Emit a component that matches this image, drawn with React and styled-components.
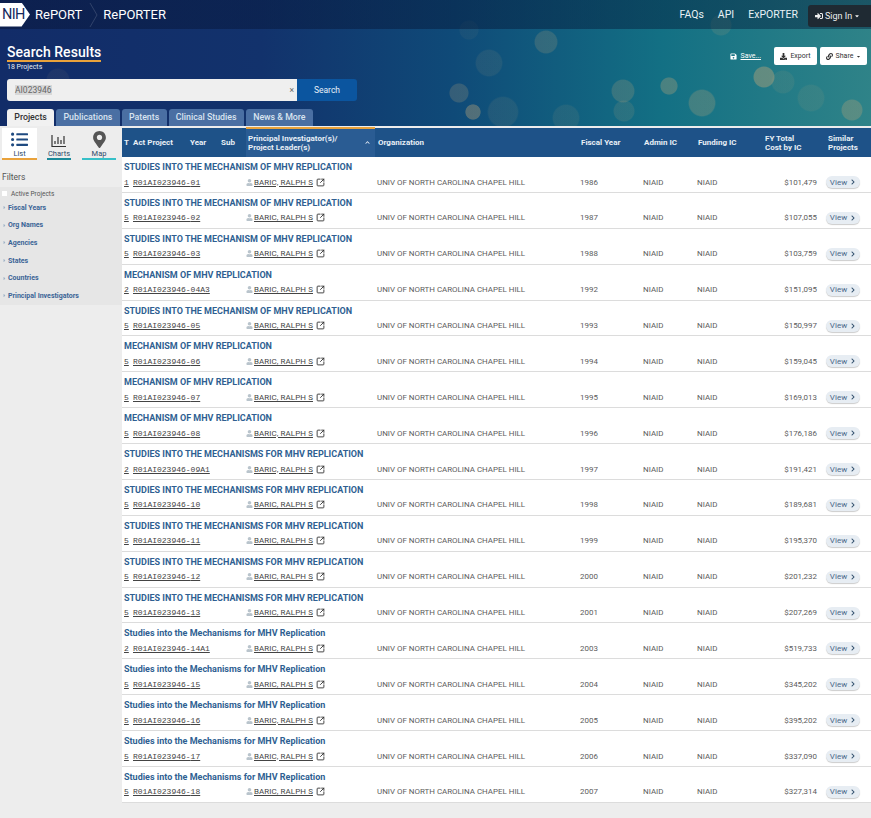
import React from 'react';
import styled, { createGlobalStyle } from 'styled-components';
import { FaSave, FaDownload, FaLink, FaSignInAlt, FaUser, FaChevronRight, FaListUl, FaMapMarkerAlt, FaCaretDown, FaCaretRight, FaChevronUp } from 'react-icons/fa';
import { SquareArrowOutUpRight } from 'lucide-react';

const GlobalStyle = createGlobalStyle`
  html, body { margin: 0; padding: 0; }
  body { background: #ededed; font-family: Roboto, "Liberation Sans", sans-serif; }
  * { box-sizing: border-box; }
`;

const Page = styled.div`
  width: 871px;
  height: 818px;
  overflow: hidden;
  background: #ededed;
`;

const bubbles = [
  [546, 42, 12, 0.2], [489, 63, 14, 0.1], [459, 93, 10, 0.22], [473, 112, 8, 0.38], [503, 112, 16, 0.1],
  [623, 91, 12, 0.22], [624, 111, 11, 0.14], [669, 86, 9, 0.32], [702, 103, 14, 0.26], [764, 77, 11, 0.42],
  [783, 82, 12, 0.1], [811, 98, 14, 0.1], [852, 110, 11, 0.3], [721, 25, 11, 0.14], [566, 118, 14, 0.1],
  [469, 30, 10, 0.06], [58, 80, 12, 0.07],
];

const bubbleLayers = bubbles
  .map(([x, y, r, a]) => `radial-gradient(circle ${r}px at ${x}px ${y}px, rgba(190,165,120,${a}) 0, rgba(190,165,120,${a}) 90%, transparent 100%)`)
  .join(', ');

const Banner = styled.div`
  height: 126px;
  display: flex;
  flex-direction: column;
  background: ${bubbleLayers}, linear-gradient(90deg, #122c68 0%, #12326c 30%, #0f4a78 52%, #137084 76%, #2f8388 100%);
`;

const TopNav = styled.nav`
  height: 29px;
  display: flex;
  align-items: center;
  background: linear-gradient(90deg, rgba(8, 20, 55, 0.5), rgba(0, 25, 55, 0.42));
  color: #fff;
`;

const NihLogo = styled.div`
  width: 30px;
  height: 24px;
  padding-left: 2px;
  background: #fff;
  color: #13295e;
  font-size: 14.5px;
  line-height: 24px;
  letter-spacing: -0.6px;
  clip-path: polygon(0 0, 72% 0, 100% 50%, 72% 100%, 0 100%);
`;

const BrandLink = styled.span`
  font-size: 13px;
  color: #fff;
  margin-left: ${p => p.$gap}px;
  margin-top: -1px;
`;

const Divider = styled.svg`
  width: 10px;
  height: 26px;
  margin-left: 7px;
`;

const NavRight = styled.div`
  margin-left: auto;
  display: flex;
  align-items: center;
  gap: 14px;
  font-size: 10.5px;
  color: #e8f2f6;
`;

const SignIn = styled.div`
  width: 63px;
  height: 22px;
  margin: 3px 0 0 -4px;
  background: #1f2a33;
  border-radius: 3px 0 0 3px;
  font-size: 9px;
  display: flex;
  align-items: center;
  gap: 2px;
  padding-left: 7px;
  color: #eee;
`;

const HeroBar = styled.div`
  display: flex;
  justify-content: space-between;
  padding: 16px 4px 0 7px;
`;

const HeadingBlock = styled.div`
  color: #fff;
`;

const Heading = styled.h1`
  margin: 0;
  font-size: 14px;
  line-height: 15px;
  font-weight: 500;
  letter-spacing: 0.05px;
  border-bottom: 2px solid #e9a23b;
`;

const Count = styled.div`
  font-size: 7px;
  line-height: 9px;
  margin-top: 1px;
  color: #e6ecf2;
`;

const Actions = styled.div`
  display: flex;
  align-items: center;
  gap: 3px;
  height: 18px;
  margin-top: 2px;
`;

const SaveLink = styled.a`
  color: #fff;
  font-size: 7px;
  display: flex;
  gap: 3px;
  align-items: center;
  margin-right: 10px;
  text-decoration: underline;
`;

const ActionButton = styled.button`
  width: ${p => p.$w}px;
  height: 18px;
  border: 0;
  padding: 0;
  border-radius: 2px;
  background: #fff;
  color: #333;
  font: 7px Roboto, sans-serif;
  display: flex;
  align-items: center;
  justify-content: center;
  gap: 3px;
`;

const SearchRow = styled.div`
  display: flex;
  margin: 7px 0 0 7px;
`;

const SearchBox = styled.div`
  width: 290px;
  height: 22px;
  background: #efefef;
  border-radius: 3px 0 0 3px;
  display: flex;
  align-items: center;
  justify-content: space-between;
  padding: 0 3px 0 8px;
  font-size: 8.5px;
  color: #666;
`;

const Selected = styled.span`
  background: #d8d8d8;
`;

const SearchButton = styled.div`
  width: 60px;
  height: 22px;
  background: #0b559f;
  color: #e8f0f8;
  font-size: 8.5px;
  line-height: 22px;
  text-align: center;
  border-radius: 0 3px 3px 0;
`;

const Tabs = styled.div`
  display: flex;
  gap: 2px;
  margin: 8px 0 0 7px;
`;

const Tab = styled.div`
  height: 17px;
  padding: 0 7.3px;
  border-radius: 3px 3px 0 0;
  font-size: 8.8px;
  line-height: 17px;
  font-weight: 500;
  background: ${p => (p.$active ? '#f1f1f1' : '#4a6fa3')};
  color: ${p => (p.$active ? '#333' : '#d9e4f0')};
`;

const Body = styled.div`
  display: flex;
  margin-top: 2px;
`;

const Sidebar = styled.aside`
  width: 122px;
  flex: none;
`;

const ViewSwitch = styled.div`
  display: flex;
  height: 32px;
`;

const ViewItem = styled.div`
  width: ${p => p.$w}px;
  margin-left: ${p => p.$ml}px;
  display: flex;
  flex-direction: column;
  align-items: center;
  justify-content: flex-end;
  gap: 2px;
  font-size: 7.5px;
  line-height: 8px;
  color: #2d4a6a;
  background: ${p => (p.$active ? '#fff' : 'transparent')};
  border-bottom: 2px solid ${p => p.$line};
`;

const FiltersTitle = styled.div`
  font-size: 8.5px;
  color: #555;
  margin: 12px 0 0 2px;
  line-height: 10px;
`;

const FilterPanel = styled.div`
  margin-top: 5px;
  padding-top: 1px;
  height: 118px;
  background: #e6e6e6;
  display: flex;
  flex-direction: column;
`;

const ActiveRow = styled.label`
  display: flex;
  align-items: center;
  height: 11px;
  font-size: 6.5px;
  color: #555;
  gap: 4px;
  padding-left: 2px;
`;

const Box = styled.span`
  width: 5px;
  height: 5px;
  background: #fff;
`;

const FilterItem = styled.div`
  height: 17.6px;
  display: flex;
  align-items: center;
  gap: 1px;
  padding-left: 2px;
  font-size: 7px;
  font-weight: 700;
  color: #3a6496;
  svg { color: #9fb2c6; }
`;

const Main = styled.main`
  width: 749px;
`;

const Head = styled.div`
  height: 29px;
  display: grid;
  grid-template-columns: 9px 57px 31px 25px 129px 205px 64px 54px 67px 63px 1fr;
  background: #1e5288;
  color: #e8eff6;
  font-size: 8px;
  font-weight: 700;
  line-height: 9px;
  padding-left: 2px;
`;

const HeadCell = styled.div`
  display: flex;
  align-items: center;
  padding-left: ${p => p.$pl || 0}px;
`;

const SortCell = styled(HeadCell)`
  background: #2a5c93;
  box-shadow: inset 0 2px 0 #e9a23b;
  margin-top: -1px;
  padding: 1px 0 0 2px;
  justify-content: space-between;
  svg { margin-right: 5px; }
`;

const Row = styled.div`
  height: 35.88px;
  background: #fff;
  border-bottom: 1px solid #dcdcdc;
  padding: 4px 0 0 2px;
`;

const Title = styled.div`
  font-size: 9px;
  line-height: 12px;
  font-weight: 700;
  color: #2f5f92;
`;

const Cells = styled.div`
  display: grid;
  grid-template-columns: 9px 113px 131px 203px 63px 54px 55px 65px 1fr;
  align-items: center;
  height: 18px;
  font-size: 7.95px;
  color: #5c5c5c;
`;

const Mono = styled.span`
  font-family: "Liberation Mono", monospace;
  font-size: 8px;
  color: #444;
  text-decoration: underline;
`;

const Person = styled.span`
  display: flex;
  align-items: center;
  gap: 1px;
  color: #444;
  svg:first-child { color: #b9c4cc; }
  svg:last-child { margin-left: 2px; color: #333; }
`;

const PersonName = styled.span`
  text-decoration: underline;
  letter-spacing: 0.1px;
`;

const Cost = styled.span`
  text-align: right;
`;

const ViewButton = styled.span`
  margin-left: 9px;
  width: 34px;
  height: 12px;
  border-radius: 6px;
  background: #e7edf3;
  box-shadow: 0 1px 1px rgba(0, 0, 0, 0.2);
  display: flex;
  align-items: center;
  justify-content: center;
  gap: 3px;
  color: #4a6a8a;
  font-size: 8px;
  svg { color: #33506e; }
`;

const upper = 'STUDIES INTO THE MECHANISM OF MHV REPLICATION';
const short = 'MECHANISM OF MHV REPLICATION';
const plural = 'STUDIES INTO THE MECHANISMS FOR MHV REPLICATION';
const mixed = 'Studies into the Mechanisms for MHV Replication';

const projects = [
  [upper, '1', '01', '1986', '$101,479'],
  [upper, '5', '02', '1987', '$107,055'],
  [upper, '5', '03', '1988', '$103,759'],
  [short, '2', '04A3', '1992', '$151,095'],
  [upper, '5', '05', '1993', '$150,997'],
  [short, '5', '06', '1994', '$159,045'],
  [short, '5', '07', '1995', '$169,013'],
  [short, '5', '08', '1996', '$176,186'],
  [plural, '2', '09A1', '1997', '$191,421'],
  [plural, '5', '10', '1998', '$189,681'],
  [plural, '5', '11', '1999', '$195,370'],
  [plural, '5', '12', '2000', '$201,232'],
  [plural, '5', '13', '2001', '$207,269'],
  [mixed, '2', '14A1', '2003', '$519,733'],
  [mixed, '5', '15', '2004', '$345,202'],
  [mixed, '5', '16', '2005', '$395,202'],
  [mixed, '5', '17', '2006', '$337,090'],
  [mixed, '5', '18', '2007', '$327,314'],
];

const filters = ['Fiscal Years', 'Org Names', 'Agencies', 'States', 'Countries', 'Principal Investigators'];

function ChartIcon() {
  return (
    <svg width="16" height="14" viewBox="0 0 16 14" fill="none" stroke="#333" strokeWidth="1.2">
      <path d="M1 1v11.5h14" />
      <path d="M4 10V7M7 10V3M10 10V6M13 10V2" />
    </svg>
  );
}

export default function App() {
  return (
    <Page>
      <GlobalStyle />
      <Banner>
        <TopNav>
          <NihLogo>NIH</NihLogo>
          <BrandLink $gap={5}>RePORT</BrandLink>
          <Divider viewBox="0 0 10 26" fill="none" stroke="rgba(255,255,255,0.15)">
            <path d="M1 1l7 12-7 12" />
          </Divider>
          <BrandLink $gap={4}>RePORTER</BrandLink>
          <NavRight>
            <span>FAQs</span>
            <span>API</span>
            <span>ExPORTER</span>
            <SignIn><FaSignInAlt size={8} /> Sign In <FaCaretDown size={6} /></SignIn>
          </NavRight>
        </TopNav>
        <HeroBar>
          <HeadingBlock>
            <Heading>Search Results</Heading>
            <Count>18 Projects</Count>
          </HeadingBlock>
          <Actions>
            <SaveLink><FaSave size={7} /> Save...</SaveLink>
            <ActionButton $w={43}><FaDownload size={7} /> Export</ActionButton>
            <ActionButton $w={47}><FaLink size={7} /> Share <FaCaretDown size={5} /></ActionButton>
          </Actions>
        </HeroBar>
        <SearchRow>
          <SearchBox><Selected>AI023946</Selected><span>×</span></SearchBox>
          <SearchButton>Search</SearchButton>
        </SearchRow>
        <Tabs>
          <Tab $active>Projects</Tab>
          <Tab>Publications</Tab>
          <Tab>Patents</Tab>
          <Tab>Clinical Studies</Tab>
          <Tab>News &amp; More</Tab>
        </Tabs>
      </Banner>
      <Body>
        <Sidebar>
          <ViewSwitch>
            <ViewItem $active $w={35} $ml={2} $line="#e9a23b"><FaListUl size={17} color="#1e4a80" /> List</ViewItem>
            <ViewItem $w={24} $ml={10} $line="#1b8a9a"><ChartIcon /> Charts</ViewItem>
            <ViewItem $w={34} $ml={11} $line="#37c0c8"><FaMapMarkerAlt size={17} color="#555" /> Map</ViewItem>
          </ViewSwitch>
          <FiltersTitle>Filters</FiltersTitle>
          <FilterPanel>
            <ActiveRow><Box /> Active Projects</ActiveRow>
            {filters.map(name => (
              <FilterItem key={name}><FaCaretRight size={5} /> {name}</FilterItem>
            ))}
          </FilterPanel>
        </Sidebar>
        <Main>
          <Head>
            <HeadCell>T</HeadCell>
            <HeadCell>Act Project</HeadCell>
            <HeadCell>Year</HeadCell>
            <HeadCell>Sub</HeadCell>
            <SortCell>
              <span>Principal Investigator(s)/<br />Project Leader(s)</span>
              <FaChevronUp size={5} />
            </SortCell>
            <HeadCell $pl={3}>Organization</HeadCell>
            <HeadCell $pl={1}>Fiscal Year</HeadCell>
            <HeadCell>Admin IC</HeadCell>
            <HeadCell>Funding IC</HeadCell>
            <HeadCell>FY Total<br />Cost by IC</HeadCell>
            <HeadCell>Similar<br />Projects</HeadCell>
          </Head>
          {projects.map(([title, type, suffix, year, cost]) => (
            <Row key={suffix}>
              <Title>{title}</Title>
              <Cells>
                <Mono>{type}</Mono>
                <Mono>R01AI023946-{suffix}</Mono>
                <Person>
                  <FaUser size={7} />
                  <PersonName>BARIC, RALPH S</PersonName>
                  <SquareArrowOutUpRight size={9} strokeWidth={2.4} />
                </Person>
                <span>UNIV OF NORTH CAROLINA CHAPEL HILL</span>
                <span>{year}</span>
                <span>NIAID</span>
                <span>NIAID</span>
                <Cost>{cost}</Cost>
                <ViewButton>View <FaChevronRight size={6} /></ViewButton>
              </Cells>
            </Row>
          ))}
        </Main>
      </Body>
    </Page>
  );
}
